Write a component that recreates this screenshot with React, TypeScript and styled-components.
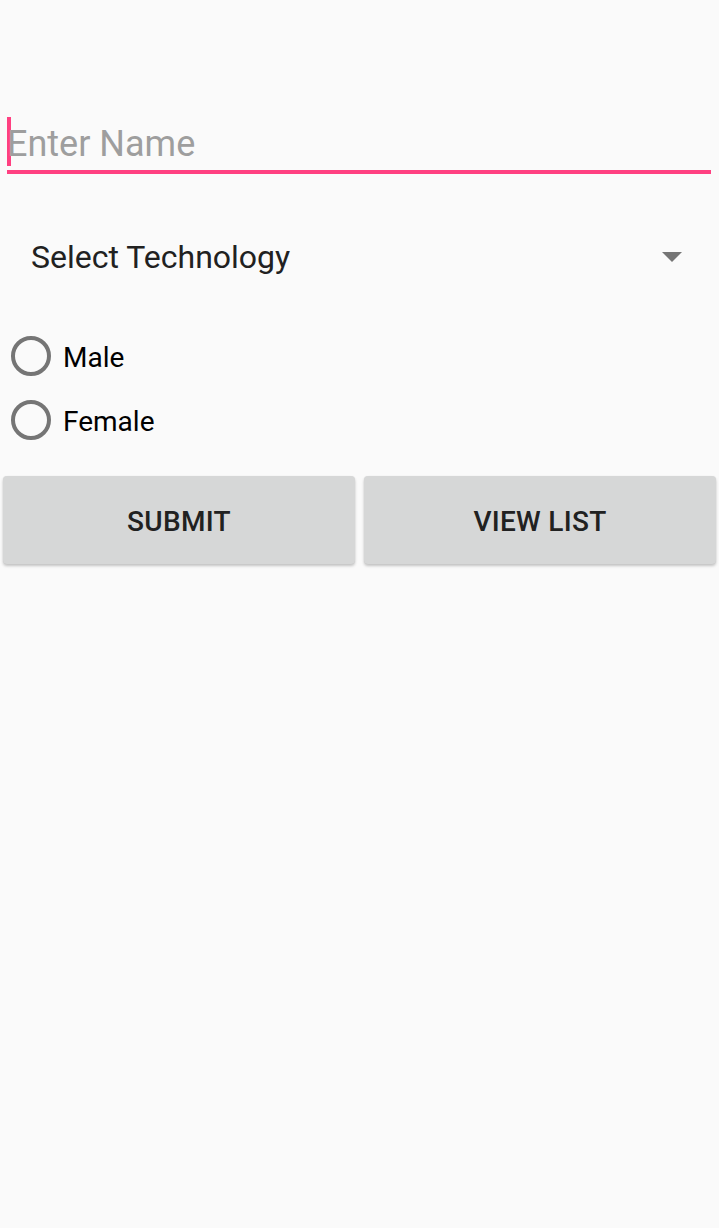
import React from "react";
import styled, { createGlobalStyle } from "styled-components";

const Global = createGlobalStyle`
  html, body {
    margin: 0;
    padding: 0;
    background: #fafafa;
  }
  body {
    font-family: Roboto, "Noto Sans", "Liberation Sans", sans-serif;
  }
`;

const Screen = styled.div`
  width: 719px;
  height: 1228px;
  background: #fafafa;
  display: flex;
  flex-direction: column;
  box-sizing: border-box;
`;

const NameField = styled.div`
  margin: 117px 8px 0 7px;
  display: flex;
  flex-direction: column;
  gap: 4px;
`;

const NameLine = styled.div`
  display: flex;
  align-items: center;
  height: 49px;
`;

const Caret = styled.span`
  width: 4px;
  height: 49px;
  background: #ff4081;
  flex: none;
`;

const Placeholder = styled.span`
  font-size: 36px;
  line-height: 48px;
  color: #9e9e9e;
  margin-left: -4px;
  margin-top: 4px;
`;

const Underline = styled.div`
  height: 4px;
  background: #ff4081;
`;

const Spinner = styled.div`
  margin-top: 63px;
  height: 40px;
  display: flex;
  align-items: center;
  justify-content: space-between;
  padding: 0 37px 0 31px;
`;

const SpinnerLabel = styled.span`
  font-size: 32px;
  line-height: 40px;
  color: #212121;
`;

const Arrow = styled.svg`
  width: 20px;
  height: 10px;
  display: block;
`;

const RadioGroup = styled.div`
  margin-top: 47px;
  display: flex;
  flex-direction: column;
`;

const RadioRow = styled.label`
  height: 64px;
  display: flex;
  align-items: center;
  padding-left: 11px;
  gap: 12px;
`;

const RadioCircle = styled.span`
  width: 40px;
  height: 40px;
  box-sizing: border-box;
  border: 4px solid #757575;
  border-radius: 50%;
  flex: none;
`;

const RadioLabel = styled.span`
  font-size: 28px;
  line-height: 32px;
  color: #000000;
  margin-top: 4px;
`;

const ButtonRow = styled.div`
  margin-top: 24px;
  display: flex;
  gap: 9px;
  padding: 0 3px;
`;

const Button = styled.button`
  flex: 1;
  height: 88px;
  border: none;
  border-radius: 4px;
  background: #d6d7d7;
  box-shadow: 0 2px 3px rgba(0, 0, 0, 0.22), 0 0 1px rgba(0, 0, 0, 0.08);
  font-family: Roboto, "Noto Sans", "Liberation Sans", sans-serif;
  font-size: 28px;
  font-weight: 500;
  color: #212121;
  letter-spacing: 0.3px;
  text-transform: uppercase;
  padding: 2px 0 0;
`;

export default function App() {
  return (
    <>
      <Global />
      <Screen>
        <NameField>
          <NameLine>
            <Caret />
            <Placeholder>Enter Name</Placeholder>
          </NameLine>
          <Underline />
        </NameField>
        <Spinner>
          <SpinnerLabel>Select Technology</SpinnerLabel>
          <Arrow viewBox="0 0 20 10">
            <polygon points="0,0 20,0 10,10" fill="#757575" />
          </Arrow>
        </Spinner>
        <RadioGroup>
          <RadioRow>
            <RadioCircle />
            <RadioLabel>Male</RadioLabel>
          </RadioRow>
          <RadioRow>
            <RadioCircle />
            <RadioLabel>Female</RadioLabel>
          </RadioRow>
        </RadioGroup>
        <ButtonRow>
          <Button>Submit</Button>
          <Button>View List</Button>
        </ButtonRow>
      </Screen>
    </>
  );
}
